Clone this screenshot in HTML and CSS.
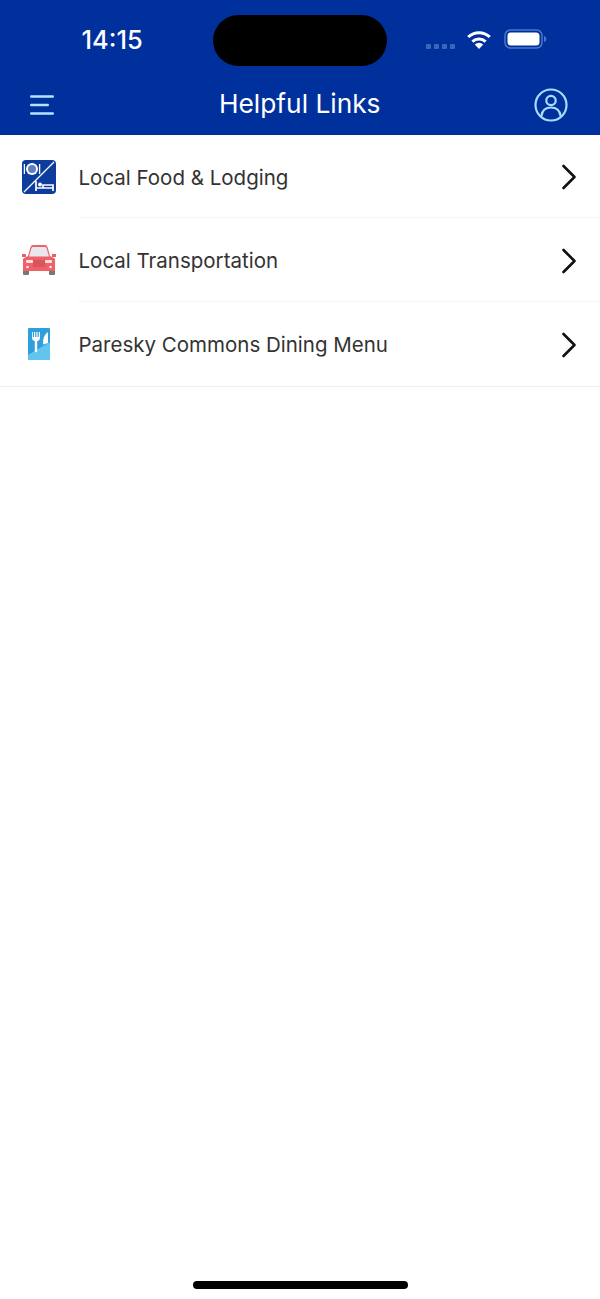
FILE: index.html
```html
<!DOCTYPE html>
<html lang="en">
<head>
<meta charset="utf-8">
<title>Helpful Links</title>
<link rel="stylesheet" href="styles.css">
</head>
<body>
<div class="screen">
  <header class="header">
    <div class="status">
      <span class="time">14:15</span>
      <span class="island"></span>
      <div class="indicators">
        <span class="signal"><i></i><i></i><i></i><i></i></span>
        <svg class="wifi" width="28" height="20" viewBox="0 0 28 20">
          <path d="M14 20l-4.2-4.6a6 6 0 0 1 8.400 0z" fill="#fff"/>
          <path d="M7.400 12.700a9.600 9.600 0 0 1 13.200 0" fill="none" stroke="#fff" stroke-width="3"/>
          <path d="M3.200 8a15.800 15.800 0 0 1 21.600 0" fill="none" stroke="#fff" stroke-width="3"/>
        </svg>
        <svg class="battery" width="44" height="22" viewBox="0 0 44 22">
          <rect x="1" y="2" width="37" height="18" rx="5.500" fill="none" stroke="#4a76c8" stroke-width="1.500"/>
          <rect x="3.500" y="4.500" width="32" height="13" rx="3.500" fill="#fff"/>
          <path d="M40 8v6c1.600-.5 2.400-1.600 2.400-3s-.8-2.500-2.400-3z" fill="#4a76c8"/>
        </svg>
      </div>
    </div>
    <nav class="nav">
      <svg class="menu" width="24" height="22" viewBox="0 0 24 22">
        <path d="M1.200 2.500h21.600M1.200 11h16.600M1.200 19.500h21.600" fill="none" stroke="#b5e2ff" stroke-width="2.400" stroke-linecap="round"/>
      </svg>
      <h1 class="title">Helpful Links</h1>
      <svg class="user" width="34" height="34" viewBox="0 0 34 34" fill="none" stroke="#a9dcfb" stroke-width="2.200">
        <circle cx="17" cy="17" r="15.500"/>
        <circle cx="17" cy="12.500" r="4.700"/>
        <path d="M7.500 27.500c.8-5 4.500-8 9.500-8s8.700 3 9.500 8" stroke-linecap="round"/>
      </svg>
    </nav>
  </header>
  <main>
    <a class="row row-first">
      <svg class="icon" width="36" height="36" viewBox="0 0 36 36">
        <rect x="1" y="1" width="34" height="34" rx="4" fill="#0c3c9e"/>
        <path d="M33 3L3 33" stroke="#fff" stroke-width="1.200"/>
        <circle cx="11" cy="10" r="6" fill="#fff"/>
        <circle cx="11" cy="10" r="4" fill="#5d7fc4"/>
        <path d="M3.400 5v10M18.600 5v10" stroke="#fff" stroke-width="1.300"/>
        <path d="M15 22v10M15 29h17v3M32 29v-3h-10v3" fill="none" stroke="#fff" stroke-width="1.700"/>
        <circle cx="19" cy="25.500" r="2" fill="#fff"/>
      </svg>
      <span class="label">Local Food &amp; Lodging</span>
      <svg class="chev" width="16" height="26" viewBox="0 0 16 26"><path d="M2.500 2l11 11-11 11" fill="none" stroke="#111" stroke-width="2.600" stroke-linecap="round" stroke-linejoin="round"/></svg>
    </a>
    <a class="row row-second">
      <svg class="icon" width="36" height="32" viewBox="0 0 36 32">
        <rect x="2" y="24" width="6" height="7" rx="1" fill="#777"/>
        <rect x="28" y="24" width="6" height="7" rx="1" fill="#777"/>
        <path d="M1 10h4v3H1zM31 10h4v3h-4z" fill="#e8626a"/>
        <path d="M7 12L9.500 3Q10 1 12 1h12q2 0 2.500 2L29 12l4 2q1 .6 1 2v11H2V16q0-1.400 1-2z" fill="#ee6168"/>
        <path d="M8 12.500L10.500 4q.3-1 1.500-1h12q1.200 0 1.500 1l2.500 8.500z" fill="#e9e6ec"/>
        <rect x="12" y="16" width="12" height="7" fill="#dc545b"/>
        <rect x="5" y="16" width="7" height="3" rx="1" fill="#fde3e0"/>
        <rect x="24" y="16" width="7" height="3" rx="1" fill="#fde3e0"/>
        <circle cx="6.500" cy="23" r="1.300" fill="#fde3e0"/>
        <circle cx="29.500" cy="23" r="1.300" fill="#fde3e0"/>
      </svg>
      <span class="label">Local Transportation</span>
      <svg class="chev" width="16" height="26" viewBox="0 0 16 26"><path d="M2.500 2l11 11-11 11" fill="none" stroke="#111" stroke-width="2.600" stroke-linecap="round" stroke-linejoin="round"/></svg>
    </a>
    <a class="row row-third">
      <svg class="icon" width="36" height="34" viewBox="0 0 36 34">
        <path d="M7 2q0-1 1-1h20q1 0 1 1v31H8q-1 0-1-1z" fill="#2f9fdc"/>
        <path d="M29 15v18H8q-1 0-1-1v-4z" fill="#63c5ee"/>
        <path d="M11 5v6q0 2.500 2.800 3.200V24a1 1 0 0 0 2.400 0V14.200Q19 13.500 19 11V5h-1.200v5h-1.200V5h-1.200v5h-1.200V5h-1.200v5h-1.200V5z" fill="#fff"/>
        <path d="M27 5v11l-5 1.500q-.5-9 5-12.500z" fill="#fff"/>
      </svg>
      <span class="label">Paresky Commons Dining Menu</span>
      <svg class="chev" width="16" height="26" viewBox="0 0 16 26"><path d="M2.500 2l11 11-11 11" fill="none" stroke="#111" stroke-width="2.600" stroke-linecap="round" stroke-linejoin="round"/></svg>
    </a>
  </main>
  <div class="home"></div>
</div>
</body>
</html>
```
FILE: styles.css
```css
* { box-sizing: border-box; }
html, body { margin: 0; padding: 0; }
body { background: #fff; font-family: Inter, "Liberation Sans", sans-serif; }
.screen { height: 1299px; display: flex; flex-direction: column; }
.header { background: #00309c; height: 135px; display: flex; flex-direction: column; flex: none; }
.status { position: relative; height: 78px; }
.time { position: absolute; left: 81.500px; top: 25px; font-size: 25.400px; line-height: 30px; font-weight: 500; color: #fff; }
.island { position: absolute; left: 213px; top: 15px; width: 174px; height: 51px; border-radius: 26px; background: #000; }
.indicators { position: absolute; left: 426px; top: 28px; display: flex; align-items: center; }
.signal { display: flex; gap: 3px; margin-top: 15px; margin-right: 10px; }
.signal i { width: 5px; height: 5px; border-radius: 1px; background: #3e66b8; display: block; }
.wifi { margin-right: 11px; }
.nav { height: 57px; display: grid; grid-template-columns: 1fr auto 1fr; align-items: center; padding: 0 32px 4px 29.500px; }
.menu { justify-self: start; }
.user { justify-self: end; }
.title { margin: 0 0 2px; font-size: 26.300px; font-weight: 400; color: #fff; line-height: 30px; transform: translateX(1px); }
main { display: flex; flex-direction: column; }
.row { display: flex; align-items: center; padding: 0 23px 0 21px; position: relative; }
.row-first { height: 83px; }
.row-second { height: 84px; }
.row-third { height: 85px; border-bottom: 1px solid #eeeeee; }
.row-first::after, .row-second::after { content: ""; position: absolute; right: 0; bottom: 0; height: 1px; background: #f5f5f5; }
.row-first::after { left: 80px; }
.row-second::after { left: 78px; }
.icon { flex: none; width: 36px; }
.label { flex: 1; margin: 2px 0 0 21.500px; font-size: 20.500px; color: #333; line-height: 26px; }
.row-second .label, .row-third .label { margin-top: 2px; }
.row-second .chev, .row-third .chev { margin-top: 2px; }
.chev { flex: none; }
.home { position: absolute; left: 193px; top: 1281px; width: 215px; height: 8px; border-radius: 4px; background: #000; }
```
